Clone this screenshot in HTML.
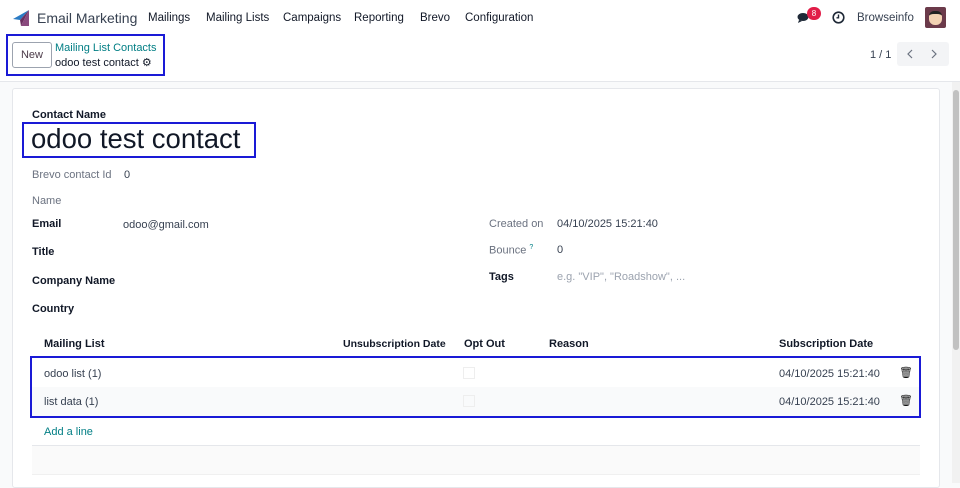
<!DOCTYPE html>
<html><head><meta charset="utf-8"><style>
*{box-sizing:border-box;margin:0;padding:0}
body{width:960px;height:483px;overflow:hidden;background:#f9fafb;font-family:"Liberation Sans",sans-serif;font-size:11px;color:#374151;position:relative}
.a{position:absolute;white-space:nowrap}
.b{font-weight:bold;color:#111827}
.g{color:#6b7280}
</style></head><body>
<div class="a" style="left:0;top:0;width:960px;height:82px;background:#fff;border-bottom:1px solid #e5e7eb"></div>
<svg class="a" style="left:11px;top:9px" width="20" height="18" viewBox="0 0 20 18"><path d="M18 1 L2 10 L9 11 Z" fill="#2b7bc4"/><path d="M18 1 L9 11 L10 17 Z" fill="#6b2f5f"/><path d="M18 1 L10 17 L18 17 Z" fill="#8a4a7e"/></svg>
<div class="a" style="left:37px;top:10px;font-size:14px;color:#374151">Email Marketing</div>
<div class="a" style="left:148px;top:12px;font-size:11.5px;color:#111827">Mailings</div>
<div class="a" style="left:206px;top:12px;font-size:11.5px;color:#111827">Mailing Lists</div>
<div class="a" style="left:283px;top:12px;font-size:11.5px;color:#111827">Campaigns</div>
<div class="a" style="left:354px;top:12px;font-size:11.5px;color:#111827">Reporting</div>
<div class="a" style="left:420px;top:12px;font-size:11.5px;color:#111827">Brevo</div>
<div class="a" style="left:465px;top:12px;font-size:11.5px;color:#111827">Configuration</div>
<svg class="a" style="left:797px;top:11px" width="16" height="14" viewBox="0 0 16 14"><ellipse cx="6" cy="6" rx="5.5" ry="4" fill="#1f2937"/><path d="M2 9 L1 12 L5 10Z" fill="#1f2937"/></svg>
<div class="a" style="left:807px;top:7px;width:14px;height:13px;border-radius:7px;background:#e11d48;color:#fff;font-size:8px;text-align:center;line-height:13px">8</div>
<svg class="a" style="left:832px;top:11px" width="13" height="13" viewBox="0 0 13 13"><circle cx="6.5" cy="6.5" r="5.3" fill="none" stroke="#1f2937" stroke-width="1.6"/><path d="M6.5 3.5V6.8H4.5" fill="none" stroke="#1f2937" stroke-width="1.4"/></svg>
<div class="a" style="left:857px;top:12px;font-size:11.5px;color:#374151">Browseinfo</div>
<div class="a" style="left:925px;top:7px;width:21px;height:21px;background:#6b3a4a;border-radius:2px"><div style="margin:4px 4px;width:13px;height:14px;background:#f3d2b3;border-radius:5px 5px 6px 6px;border-top:3px solid #222"></div></div>

<div class="a" style="left:6px;top:34px;width:159px;height:42px;border:2px solid #1a1ad6"></div>
<div class="a" style="left:12px;top:42px;width:40px;height:26px;border:1px solid #9ca3af;border-radius:3px;font-size:11px;color:#4b3a48;text-align:center;line-height:24px">New</div>
<div class="a" style="left:55px;top:42px;font-size:11px;color:#017e84">Mailing List Contacts</div>
<div class="a" style="left:55px;top:56px;font-size:11px;color:#111827">odoo test contact <span style="font-size:11px">⚙</span></div>
<div class="a" style="left:870px;top:49px;font-size:11px;color:#374151">1 / 1</div>
<div class="a" style="left:897px;top:42px;width:52px;height:24px;background:#f3f4f6;border-radius:3px"></div>
<svg class="a" style="left:897px;top:42px" width="52" height="24" viewBox="0 0 52 24"><path d="M15 8 L11 12 L15 16 M35 8 L39 12 L35 16" fill="none" stroke="#6b7280" stroke-width="1.2"/></svg>

<div class="a" style="left:12px;top:88px;width:928px;height:400px;background:#fff;border:1px solid #e5e7eb;border-radius:3px"></div>
<div class="a" style="left:952px;top:82px;width:8px;height:401px;background:#f1f1f1"></div>
<div class="a" style="left:953px;top:90px;width:6px;height:260px;background:#c1c1c1;border-radius:3px"></div>

<div class="a b" style="left:32px;top:109px">Contact Name</div>
<div class="a" style="left:22px;top:122px;width:234px;height:36px;border:2px solid #1a1ad6"></div>
<div class="a" style="left:31px;top:123px;font-size:27.5px;color:#111827">odoo test contact</div>
<div class="a g" style="left:32px;top:169px">Brevo contact Id</div>
<div class="a" style="left:124px;top:169px">0</div>
<div class="a g" style="left:32px;top:195px">Name</div>
<div class="a b" style="left:32px;top:218px">Email</div>
<div class="a" style="left:123px;top:219px">odoo@gmail.com</div>
<div class="a b" style="left:32px;top:246px">Title</div>
<div class="a b" style="left:32px;top:275px">Company Name</div>
<div class="a b" style="left:32px;top:303px">Country</div>
<div class="a g" style="left:489px;top:218px">Created on</div>
<div class="a" style="left:557px;top:218px">04/10/2025 15:21:40</div>
<div class="a g" style="left:489px;top:244px">Bounce <sup style="color:#017e84;font-size:7px">?</sup></div>
<div class="a" style="left:557px;top:244px">0</div>
<div class="a b" style="left:489px;top:271px">Tags</div>
<div class="a" style="left:557px;top:271px;color:#9ca3af">e.g. "VIP", "Roadshow", ...</div>

<div class="a b" style="left:44px;top:338px">Mailing List</div>
<div class="a b" style="left:343px;top:338px;font-size:10.5px">Unsubscription Date</div>
<div class="a b" style="left:464px;top:338px">Opt Out</div>
<div class="a b" style="left:549px;top:338px">Reason</div>
<div class="a b" style="left:779px;top:338px">Subscription Date</div>
<div class="a" style="left:32px;top:356px;width:888px;height:1px;background:#d1d5db"></div>
<div class="a" style="left:32px;top:387px;width:888px;height:29px;background:#f9fafb"></div>
<div class="a" style="left:30px;top:356px;width:891px;height:62px;border:2px solid #1a1ad6"></div>
<div class="a" style="left:44px;top:368px">odoo list (1)</div>
<div class="a" style="left:44px;top:396px">list data (1)</div>
<div class="a" style="left:463px;top:367px;width:12px;height:12px;border:1px solid #eee"></div>
<div class="a" style="left:463px;top:395px;width:12px;height:12px;border:1px solid #eee"></div>
<div class="a" style="left:779px;top:368px">04/10/2025 15:21:40</div>
<div class="a" style="left:779px;top:396px">04/10/2025 15:21:40</div>
<div class="a" style="left:899px;top:366px;font-size:11px;color:#111">🗑</div>
<div class="a" style="left:899px;top:394px;font-size:11px;color:#111">🗑</div>
<div class="a" style="left:44px;top:426px;color:#017e84">Add a line</div>
<div class="a" style="left:32px;top:445px;width:888px;height:30px;background:#fafafa;border-top:1px solid #e5e7eb;border-bottom:1px solid #f0f0f0"></div>
</body></html>
